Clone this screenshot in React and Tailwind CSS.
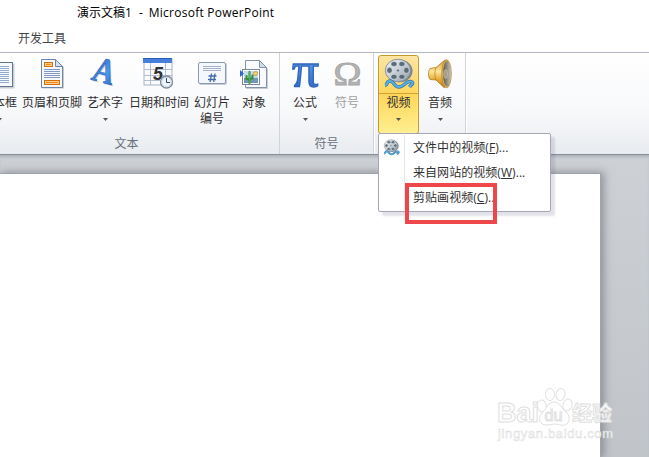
import { clsx } from 'clsx';

const TextBoxIcon = () => (
  <svg width="32" height="32" viewBox="0 0 32 32">
    <rect x="3.5" y="5.5" width="28" height="25" fill="#c9ced6" />
    <rect x="2.5" y="4.5" width="27" height="24" fill="#f6f9fd" stroke="#65758f" />
    {[8, 10, 12, 14, 16, 18, 20, 22, 24].map((y) => (
      <path key={y} d={`M6 ${y + 0.5}H26`} stroke="#93a9cb" />
    ))}
  </svg>
);

const HeaderFooterIcon = () => (
  <svg width="32" height="32" viewBox="0 0 32 32">
    <path d="M6 2H20L28 9V30.5H6Z" fill="#c5cad3" />
    <path d="M5.5 1.5H19.5L26.5 8.5V29.5H5.5Z" fill="#f5f8fc" stroke="#7186a5" />
    <path d="M19.5 1.5V8.5H26.5Z" fill="#d5dfed" stroke="#7186a5" />
    <rect x="8.5" y="4.5" width="8" height="4" fill="#fbd18b" stroke="#dc6b08" />
    <path d="M10 6.5H15" stroke="#ee8a21" />
    {[11, 13, 15, 17, 19].map((y) => (
      <path key={y} d={`M8 ${y + 0.5}H24`} stroke="#8297c5" />
    ))}
    <rect x="8.5" y="22.5" width="15" height="4" fill="#fbd18b" stroke="#dc6b08" />
    <path d="M10 24.5H22" stroke="#ee8a21" />
  </svg>
);

const WordArtIcon = () => (
  <svg width="32" height="32" viewBox="0 0 32 32" className="overflow-visible">
    <defs>
      <linearGradient id="wordart" x1="0" y1="0" x2="1" y2="1">
        <stop offset="0" stopColor="#1c50b0" />
        <stop offset=".6" stopColor="#4b98ea" />
        <stop offset="1" stopColor="#2464c4" />
      </linearGradient>
    </defs>
    <g fontFamily="Liberation Serif, serif" fontWeight="bold" fontStyle="italic" fontSize="37" transform="skewY(15) skewX(-8)">
      <text x="7" y="22" textLength="21" lengthAdjust="spacingAndGlyphs" fill="#c5cddb">A</text>
      <text x="6" y="21" textLength="21" lengthAdjust="spacingAndGlyphs" fill="url(#wordart)" stroke="#2459af" strokeWidth=".5">A</text>
    </g>
  </svg>
);

const DateTimeIcon = () => (
  <svg width="32" height="32" viewBox="0 0 32 32">
    <rect x="1" y="1" width="28" height="26" fill="#fafbfe" stroke="#a7b1c5" />
    <path d="M1 11.5H29M1 17.5H29M1 22.5H29M7.5 5V27M22.5 5V27" stroke="#b4bdce" />
    <rect x="0" y="0" width="29" height="5" fill="#477fda" />
    <path d="M0 .5H29" stroke="#2a5eb9" />
    <text x="10" y="22" fontFamily="Liberation Sans, sans-serif" fontWeight="bold" fontStyle="italic" fontSize="18" fill="#333">5</text>
    <circle cx="23.5" cy="24" r="6" fill="#eef3f9" stroke="#7c8ba1" strokeWidth="1.3" />
    <circle cx="23.5" cy="24" r="4.7" fill="none" stroke="#c1cad6" strokeWidth=".7" />
    <path d="M23.5 20V24.5H27" fill="none" stroke="#34455e" />
  </svg>
);

const SlideNumberIcon = () => (
  <svg width="32" height="32" viewBox="0 0 32 32">
    <rect x="3" y="5" width="28" height="22" rx="2" fill="#c8cdd6" />
    <rect x="2.5" y="4.5" width="27" height="21" rx="1.5" fill="#f4f7fc" stroke="#8999b4" />
    {[8, 10, 12].map((y) => (
      <path key={y} d={`M7 ${y + 0.5}H25`} stroke="#a6b1c6" />
    ))}
    <path d="M15.5 15.5L14.2 24M19 15.5L17.7 24M12.5 18H20.5M12 21.5H20" fill="none" stroke="#426dac" strokeWidth="1.3" />
  </svg>
);

const ObjectIcon = () => (
  <svg width="32" height="32" viewBox="0 0 32 32">
    <path d="M8 3H22L30 11V31H8Z" fill="#c8cdd5" />
    <path d="M7.5 2.5H21.5L28.5 9.5V29.5H7.5Z" fill="#f8fafe" stroke="#8493aa" />
    <path d="M21.5 2.5V9.5H28.5Z" fill="#cfdcea" stroke="#8493aa" />
    <rect x="4.5" y="11.5" width="17" height="15" fill="#fff" stroke="#7b8698" />
    <rect x="6" y="13" width="14" height="12" fill="#c4dced" />
    <rect x="6" y="20" width="14" height="5" fill="#7598b2" />
    <circle cx="17.5" cy="15.5" r="2.1" fill="#f3cf67" stroke="#b88929" strokeWidth=".6" />
    <path d="M11.5 25V14M8.5 18V21H11.5M14.5 17.5V20.5H11.5" fill="none" stroke="#318e37" strokeWidth="2.1" strokeLinejoin="round" strokeLinecap="round" />
    <path d="M11.5 25V14" stroke="#62bd59" strokeWidth=".8" />
    <path d="M2 12L6 15.5L2 19Z" fill="#2f65cc" />
  </svg>
);

const PiIcon = () => (
  <svg width="32" height="32" viewBox="0 0 32 32" className="overflow-visible">
    <defs>
      <linearGradient id="pi" x1="0" y1="0" x2="0" y2="1">
        <stop offset=".4" stopColor="#5597e4" />
        <stop offset="1" stopColor="#2358b3" />
      </linearGradient>
    </defs>
    <text x="3" y="28.5" textLength="27" lengthAdjust="spacingAndGlyphs" fontFamily="Liberation Serif, serif" fontSize="51" fill="url(#pi)" stroke="#2f66bf" strokeWidth="1.3">π</text>
  </svg>
);

const OmegaIcon = () => (
  <svg width="32" height="32" viewBox="0 0 32 32">
    <text x="2.5" y="27" textLength="28" lengthAdjust="spacingAndGlyphs" fontFamily="Liberation Serif, serif" fontSize="34" fill="#b4b4b4" stroke="#a6a6a6" strokeWidth=".9">Ω</text>
  </svg>
);

// Shared by the ribbon button and the first menu row
const VideoIcon = ({ size = 32 }) => (
  <svg width={size} height={size} viewBox="0 0 32 32" className="shrink-0">
    <defs>
      <linearGradient id={`reel${size}`} x1="0" y1="0" x2="1" y2="1">
        <stop offset="0" stopColor="#f4f6f8" />
        <stop offset=".5" stopColor="#c5cdd3" />
        <stop offset="1" stopColor="#8e9aa4" />
      </linearGradient>
    </defs>
    <ellipse cx="16.8" cy="13" rx="12.7" ry="11.3" fill="#77848f" />
    <ellipse cx="15" cy="12.5" rx="12.7" ry="11.3" fill={`url(#reel${size})`} stroke="#7f8c97" strokeWidth=".9" />
    <g fill="#596a78" stroke="#eef1f3" strokeWidth=".5">
      <ellipse cx="11" cy="6" rx="3.1" ry="2.5" />
      <ellipse cx="18.9" cy="6" rx="3.1" ry="2.5" />
      <ellipse cx="6.5" cy="12.3" rx="2.7" ry="3" />
      <ellipse cx="23.4" cy="12.3" rx="2.7" ry="3" />
      <ellipse cx="11" cy="18.8" rx="3.1" ry="2.5" />
      <ellipse cx="18.9" cy="18.8" rx="3.1" ry="2.5" />
      <circle cx="15" cy="12.4" r="1.5" />
    </g>
    <path d="M2 27.5C5 27 3 23 7 23C11 23 11 29 16 29S23 22.5 27.5 23.5S28 27 26.5 29" fill="none" stroke="#2d7cae" strokeWidth="3.6" />
    <path d="M2 27.5C5 27 3 23 7 23C11 23 11 29 16 29S23 22.5 27.5 23.5S28 27 26.5 29" fill="none" stroke="#5faedb" strokeWidth="2" />
  </svg>
);

const AudioIcon = () => (
  <svg width="32" height="32" viewBox="0 0 32 32">
    <defs>
      <linearGradient id="horn" x1="0" y1="0" x2="0" y2="1">
        <stop offset="0" stopColor="#d79a25" />
        <stop offset=".42" stopColor="#ffe59a" />
        <stop offset=".7" stopColor="#e5ac35" />
        <stop offset="1" stopColor="#b27717" />
      </linearGradient>
      <linearGradient id="cone" x1="0" y1="0" x2="1" y2="0">
        <stop offset="0" stopColor="#5c5548" />
        <stop offset="1" stopColor="#c7c4bb" />
      </linearGradient>
    </defs>
    <path d="M6 10.5C4 13 4 19 6 21.5L12 22L20 29.5C25 30 25 2 21 2L12 9.5Z" fill="url(#horn)" stroke="#b27b20" strokeWidth=".8" />
    <path d="M12 9.5C10.5 13 10.5 18 12 22" fill="none" stroke="#b27b20" strokeWidth=".7" />
    <ellipse cx="22.5" cy="15.8" rx="4.8" ry="14" fill="#e0b34e" stroke="#a7802f" strokeWidth=".7" />
    <ellipse cx="23" cy="15.8" rx="3.9" ry="12.8" fill="url(#cone)" />
    <ellipse cx="21.6" cy="16" rx="1.9" ry="4.5" fill="#a39b87" stroke="#d0c9b5" strokeWidth=".6" />
  </svg>
);

const textTools = [
  { id: 'textbox', label: '文本框', icon: <TextBoxIcon />, width: 'w-[42px]', arrow: true },
  { id: 'header', label: '页眉和页脚', icon: <HeaderFooterIcon />, width: 'w-16' },
  { id: 'wordart', label: '艺术字', icon: <WordArtIcon />, width: 'w-[42px]', arrow: true },
  { id: 'date', label: '日期和时间', icon: <DateTimeIcon />, width: 'w-[66px]' },
  { id: 'number', label: '幻灯片', second: '编号', icon: <SlideNumberIcon />, width: 'w-10' },
  { id: 'object', label: '对象', icon: <ObjectIcon />, width: 'w-11' },
];

const symbolTools = [
  { id: 'formula', label: '公式', icon: <PiIcon />, width: 'w-[42px]', arrow: true },
  { id: 'symbol', label: '符号', icon: <OmegaIcon />, width: 'w-[42px]', disabled: true },
];

const mediaTools = [
  { id: 'video', label: '视频', icon: <VideoIcon />, width: 'w-[41px]', arrow: true, active: true },
  { id: 'audio', label: '音频', icon: <AudioIcon />, width: 'w-[42px]', arrow: true },
];

const menuItems = [
  { label: '文件中的视频', accel: 'F', icon: <VideoIcon size={17} /> },
  { label: '来自网站的视频', accel: 'W' },
  { label: '剪贴画视频', accel: 'C' },
];

function RibbonButton({ tool }) {
  return (
    <button
      type="button"
      className={clsx(
        'flex h-[79px] shrink-0 flex-col items-center border pt-px',
        tool.width,
        tool.active
          ? 'rounded-[3px] border-[#c29b29] bg-linear-to-b from-[#fce3a0] from-0% via-[#ffd65a] via-50% to-[#ffef90] shadow-[inset_0_0_2px_#fff3b5]'
          : 'border-transparent'
      )}
    >
      <span className={clsx('flex h-[37px] w-full shrink-0 justify-center pt-px', tool.active && 'border-b border-[#d1a13b]')}>
        {tool.icon}
      </span>
      <span className={clsx('h-4 text-xs leading-[18px] whitespace-nowrap', tool.disabled ? 'text-[#a0a0a0]' : 'text-[#303030]')}>
        {tool.label}
      </span>
      {tool.second && <span className="text-xs leading-[18px] text-[#303030]">{tool.second}</span>}
      {tool.arrow && (
        <svg width="5" height="3" viewBox="0 0 5 3" className="mt-2">
          <path d="M0 0H5L2.5 3Z" fill="#555" />
        </svg>
      )}
    </button>
  );
}

function RibbonGroup({ title, tools, className, rowClass }) {
  return (
    <section className={clsx('flex h-full shrink-0 flex-col border-r border-[#d1d5db] shadow-[1px_0_0_#fff]', className)}>
      <div className={clsx('flex h-[81px] pt-[2px]', rowClass)}>
        {tools.map((tool) => <RibbonButton key={tool.id} tool={tool} />)}
      </div>
      <div className="text-center text-xs leading-[19px] text-[#68717c]">{title}</div>
    </section>
  );
}

function VideoMenu() {
  return (
    <div className="absolute top-[133px] left-[378px] z-10 h-[79px] w-[173px] rounded-[2px] border border-[#a4a9b1] bg-white py-px shadow-[4px_4px_2px_rgba(100,95,145,0.18)]">
      {menuItems.map((item) => (
        <div key={item.accel} className="flex h-[25px] items-center text-xs text-[#303030]">
          <div className="flex h-full w-[26px] items-center justify-center border-r border-[#e4e6e9]">{item.icon}</div>
          <span className="pl-2 tracking-[0.05px] whitespace-nowrap">
            {item.label}(<u className="underline-offset-1">{item.accel}</u>)...
          </span>
        </div>
      ))}
    </div>
  );
}

function Watermark() {
  return (
    <svg className="absolute top-[384px] left-[494px]" width="125" height="62" viewBox="0 0 125 62" fill="#fff" stroke="#e0e0e0" strokeWidth="1">
      <text x="3" y="38" fontFamily="Liberation Sans, sans-serif" fontSize="27" fontWeight="bold" textLength="42" lengthAdjust="spacingAndGlyphs">Bai</text>
      <ellipse cx="48" cy="22" rx="4.5" ry="6" transform="rotate(-12 48 22)" />
      <ellipse cx="56" cy="10.5" rx="4.5" ry="6" />
      <ellipse cx="66.5" cy="10.5" rx="4.5" ry="6" transform="rotate(12 66.5 10.5)" />
      <ellipse cx="73.5" cy="21" rx="4.5" ry="6" transform="rotate(15 73.5 21)" />
      <path d="M60 18C54 18 53 24 48 29C43 35 46 41 52 41C56 41 58 40 61 40S67 42 71 41C76 39 77 33 72 28C67 24 66 18 60 18Z" />
      <text x="50.5" y="37" fontFamily="Liberation Sans, sans-serif" fontSize="17" textLength="18" lengthAdjust="spacingAndGlyphs" fill="#f4f4f4">du</text>
      <text x="78" y="37" fontFamily="Noto Sans CJK SC, sans-serif" fontSize="20" fontWeight="bold">经验</text>
      <text x="4" y="54" fontFamily="Liberation Sans, sans-serif" fontSize="13" fill="#fff" stroke="#dadada" strokeWidth=".5" textLength="115">jingyan.baidu.com</text>
    </svg>
  );
}

export default function App() {
  return (
    <div className="relative flex h-[457px] w-[649px] flex-col overflow-hidden bg-white font-['Open_Sans','Noto_Sans_CJK_SC',sans-serif]">
      <header className="h-[52px] shrink-0">
        <div className="flex h-[26px] items-center pl-[77px] text-xs text-black">
          <span>演示文稿1</span>
          <span className="ml-[7px]">-</span>
          <span className="ml-[6px] tracking-[0.25px]">Microsoft PowerPoint</span>
        </div>
        <div className="flex h-[26px] items-center pl-[18px] text-xs text-[#444]">开发工具</div>
      </header>

      <div className="flex h-[103px] shrink-0 border-t border-b border-t-[#b3b7be] border-b-[#898e96] bg-linear-to-b from-white via-[#f7f8fa] via-60% to-[#e8ebef]">
        {/* The text group starts left of the window edge */}
        <div className="flex w-[280px] shrink-0 justify-end overflow-hidden">
          <RibbonGroup title="文本" tools={textTools} className="w-[306px]" rowClass="pl-1" />
        </div>
        <RibbonGroup title="符号" tools={symbolTools} className="w-[94px]" rowClass="pl-1" />
        <RibbonGroup title="" tools={mediaTools} className="w-[92px]" rowClass="pl-1" />
      </div>

      <main className="flex-1 bg-linear-to-b from-[#cdd0d4] to-[#c1c5ca] pt-[18px] shadow-[inset_0_3px_3px_-1px_#aeb3ba]">
        <div className="h-full w-[601px] border-t border-r border-[#9da4ad] bg-white shadow-[2px_0_8px_1px_rgba(85,90,98,0.5)]" />
      </main>

      <VideoMenu />
      <div className="absolute top-[183px] left-[405px] z-20 h-[41px] w-[92px] border-4 border-[#ee474b]" />
      <Watermark />
    </div>
  );
}
